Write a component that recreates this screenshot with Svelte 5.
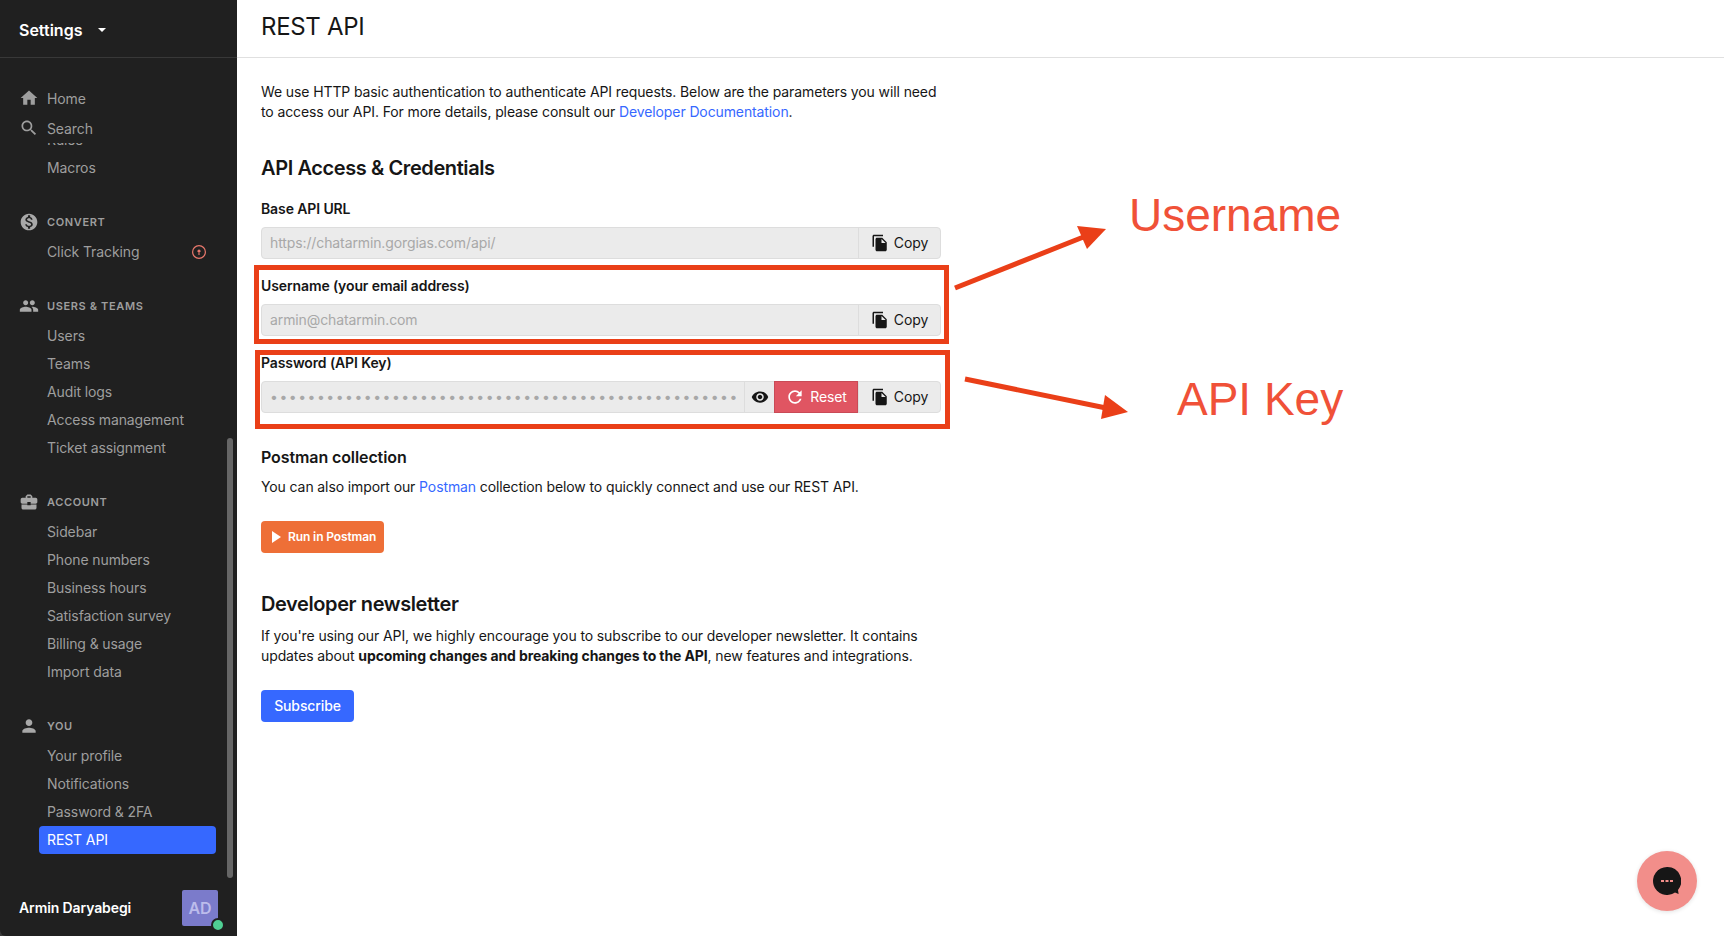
<script>
  const icons = {
    home: 'M10 20v-6h4v6h5v-8h3L12 3 2 12h3v8z',
    search: 'M15.5 14h-.79l-.28-.27C15.41 12.59 16 11.11 16 9.5 16 5.91 13.09 3 9.5 3S3 5.91 3 9.5 5.91 16 9.5 16c1.61 0 3.09-.59 4.23-1.57l.27.28v.79l5 4.99L20.49 19l-4.99-5zm-6 0C7.01 14 5 11.99 5 9.5S7.01 5 9.5 5 14 7.01 14 9.5 11.99 14 9.5 14z',
    convert: 'M12 2C6.48 2 2 6.48 2 12s4.48 10 10 10 10-4.48 10-10S17.52 2 12 2zm1.41 16.09V20h-2.67v-1.93c-1.71-.36-3.16-1.46-3.27-3.4h1.96c.1 1.05.82 1.87 2.65 1.87 1.96 0 2.4-.98 2.4-1.59 0-.83-.44-1.61-2.67-2.14-2.48-.6-4.18-1.62-4.18-3.67 0-1.72 1.39-2.84 3.11-3.21V4h2.67v1.95c1.86.45 2.79 1.86 2.85 3.39H14.3c-.05-1.11-.64-1.87-2.22-1.87-1.5 0-2.4.68-2.4 1.64 0 .84.65 1.39 2.67 1.91s4.18 1.39 4.18 3.91c-.01 1.83-1.38 2.83-3.12 3.16z',
    people: 'M16 11c1.66 0 2.99-1.34 2.99-3S17.66 5 16 5c-1.66 0-3 1.34-3 3s1.34 3 3 3zm-8 0c1.66 0 2.99-1.34 2.99-3S9.66 5 8 5C6.34 5 5 6.34 5 8s1.34 3 3 3zm0 2c-2.33 0-7 1.17-7 3.5V19h14v-2.5c0-2.33-4.67-3.5-7-3.5zm8 0c-.29 0-.62.02-.97.05 1.16.84 1.97 1.97 1.97 3.45V19h6v-2.5c0-2.33-4.67-3.5-7-3.5z',
    account: 'M10 16v-1H3.01L3 19c0 1.11.89 2 2 2h14c1.11 0 2-.89 2-2v-4h-7v1h-4zm10-9h-4.01V5l-2-2h-4l-2 2v2H4c-1.1 0-2 .9-2 2v3c0 1.11.89 2 2 2h6v-2h4v2h6c1.1 0 2-.9 2-2V9c0-1.1-.9-2-2-2zm-6 0h-4V5h4v2z',
    person: 'M12 12c2.21 0 4-1.79 4-4s-1.79-4-4-4-4 1.79-4 4 1.79 4 4 4zm0 2c-2.67 0-8 1.34-8 4v2h16v-2c0-2.66-5.33-4-8-4z',
    copy: 'M16 1H4c-1.1 0-2 .9-2 2v14h2V3h12V1zm-1 4l6 6v10c0 1.1-.9 2-2 2H7.99C6.89 23 6 22.1 6 21l.01-14c0-1.1.89-2 1.99-2h7zm-1 7h5.5L14 6.5V12z',
    eye: 'M12 4.5C7 4.5 2.73 7.61 1 12c1.73 4.39 6 7.5 11 7.5s9.27-3.11 11-7.5c-1.73-4.39-6-7.5-11-7.5zM12 17c-2.76 0-5-2.24-5-5s2.24-5 5-5 5 2.24 5 5-2.24 5-5 5zm0-8c-1.66 0-3 1.34-3 3s1.34 3 3 3 3-1.34 3-3-1.34-3-3-3z',
    reset: 'M17.65 6.35C16.2 4.9 14.21 4 12 4c-4.42 0-7.99 3.58-7.99 8s3.57 8 7.99 8c3.73 0 6.84-2.55 7.73-6h-2.08c-.82 2.33-3.04 4-5.65 4-3.31 0-6-2.69-6-6s2.69-6 6-6c1.66 0 3.14.69 4.22 1.78L13 11h7V4l-2.35 2.35z'
  };

  const sections = [
    { title: 'Convert', icon: 'convert', items: ['Click Tracking'] },
    { title: 'Users & teams', icon: 'people', items: ['Users', 'Teams', 'Audit logs', 'Access management', 'Ticket assignment'] },
    { title: 'Account', icon: 'account', items: ['Sidebar', 'Phone numbers', 'Business hours', 'Satisfaction survey', 'Billing & usage', 'Import data'] },
    { title: 'You', icon: 'person', items: ['Your profile', 'Notifications', 'Password & 2FA', 'REST API'] }
  ];

  const active = 'REST API';
  const apiKey = 'x'.repeat(71);
</script>

{#snippet icon(name, size)}
  <svg class="icon" width={size} height={size} viewBox="0 0 24 24" fill="currentColor" aria-hidden="true"><path d={icons[name]} /></svg>
{/snippet}

{#snippet copyButton()}
  <button class="addon copy">{@render icon('copy', 18)}Copy</button>
{/snippet}

<div class="page">
  <aside class="sidebar">
    <div class="sidebar-head">
      <span>Settings</span>
      <span class="caret"></span>
    </div>

    <nav class="top-links">
      <a class="top-link">{@render icon('home', 20)}<span>Home</span></a>
      <a class="top-link">{@render icon('search', 20)}<span>Search</span></a>
    </nav>

    <div class="scroll">
      <a class="nav-item rules">Rules</a>
      <a class="nav-item">Macros</a>

      {#each sections as section}
        <section class="nav-section">
          <h4>
            <span class="section-icon">{@render icon(section.icon, 20)}</span>
            {section.title}
          </h4>
          {#each section.items as item}
            <a class="nav-item" class:active={item === active}>
              {item}
              {#if item === 'Click Tracking'}
                <svg class="upgrade" width="16" height="16" viewBox="0 0 16 16" fill="none" stroke="#e9786c" aria-hidden="true">
                  <circle cx="8" cy="8" r="6.4" stroke-width="1.2" />
                  <path d="M8 11V6M6.5 7.5 8 6l1.500 1.500" stroke-width="1.1" />
                </svg>
              {/if}
            </a>
          {/each}
        </section>
      {/each}
      <div class="scrollbar"></div>
    </div>

    <div class="user">
      <span class="user-name">Armin Daryabegi</span>
      <span class="avatar">AD<span class="status"></span></span>
    </div>
  </aside>

  <main class="main">
    <header class="main-head">REST API</header>

    <div class="content">
      <p class="intro">We use HTTP basic authentication to authenticate API requests. Below are the parameters you will need to access our API. For more details, please consult our <a href="#docs">Developer Documentation</a>.</p>

      <h2>API Access &amp; Credentials</h2>

      <div class="field">
        <label for="base">Base API URL</label>
        <div class="group">
          <input id="base" readonly value="https://chatarmin.gorgias.com/api/" />
          {@render copyButton()}
        </div>
      </div>

      <div class="field">
        <label for="username">Username (your email address)</label>
        <div class="group">
          <input id="username" readonly value="armin@chatarmin.com" />
          {@render copyButton()}
        </div>
      </div>

      <div class="field">
        <label for="password">Password (API Key)</label>
        <div class="group">
          <input id="password" type="password" readonly value={apiKey} />
          <button class="addon eye">{@render icon('eye', 18)}</button>
          <button class="addon reset">{@render icon('reset', 20)}Reset</button>
          {@render copyButton()}
        </div>
      </div>

      <h3>Postman collection</h3>
      <p>You can also import our <a href="#postman">Postman</a> collection below to quickly connect and use our REST API.</p>
      <button class="postman"><span class="play"></span>Run in Postman</button>

      <h2 class="newsletter">Developer newsletter</h2>
      <p>If you're using our API, we highly encourage you to subscribe to our developer newsletter. It contains updates about <strong>upcoming changes and breaking changes to the API</strong>, new features and integrations.</p>
      <button class="subscribe">Subscribe</button>
    </div>
  </main>

  <!-- annotations drawn on top of the screenshot -->
  <div class="mark mark-user"></div>
  <div class="mark mark-key"></div>
  <svg class="arrows" width="1724" height="936" viewBox="0 0 1724 936" aria-hidden="true">
    <path d="M955 288 1086 236" stroke="#ea3f18" stroke-width="5" fill="none" />
    <path d="M1077 226 1106 229 1087 249z" fill="#ea3f18" />
    <path d="M965 379 1106 408" stroke="#ea3f18" stroke-width="5" fill="none" />
    <path d="M1105 395 1128 412 1101 419z" fill="#ea3f18" />
  </svg>
  <span class="note note-user">Username</span>
  <span class="note note-key">API Key</span>

  <button class="chat" aria-label="Open chat">
    <svg width="28" height="28" viewBox="0 0 28 28" aria-hidden="true">
      <path d="M14 0a14 14 0 1 0 8 25.5l3.6 1.4-.6-4A14 14 0 0 0 14 0z" fill="#161616" />
      <rect x="8" y="13" width="3" height="2" fill="#f28e8a" />
      <rect x="12.500" y="13" width="3" height="2" fill="#f28e8a" />
      <rect x="17" y="13" width="3" height="2" fill="#f28e8a" />
    </svg>
  </button>
</div>

<style>
  :global(body) {
    margin: 0;
    background: #fff;
    font-family: Inter, "Liberation Sans", sans-serif;
    color: #161616;
  }

  .page {
    position: relative;
    display: flex;
    width: 1724px;
    height: 936px;
    overflow: hidden;
    background: #3a3a3a;
    font-size: 14px;
    line-height: 20px;
    letter-spacing: -0.11px;
  }

  .sidebar {
    display: flex;
    flex-direction: column;
    flex: 0 0 237px;
    background: #202020;
    color: #9e9e9e;
    border-bottom-left-radius: 6px;
  }

  .sidebar-head {
    display: flex;
    align-items: center;
    gap: 16px;
    height: 58px;
    box-sizing: border-box;
    padding: 2px 19px 0;
    border-bottom: 1px solid #383838;
    color: #fff;
    font-size: 16px;
    font-weight: 600;
    letter-spacing: 0;
  }

  .caret {
    width: 0;
    height: 0;
    border-left: 4px solid transparent;
    border-right: 4px solid transparent;
    border-top: 4px solid #fff;
  }

  .top-links {
    display: flex;
    flex-direction: column;
    gap: 2px;
    padding-top: 27px;
  }

  .top-link {
    display: flex;
    align-items: center;
    gap: 8px;
    height: 28px;
    padding-left: 19px;
  }

  .top-link .icon {
    margin-top: -2px;
  }

  .scroll {
    position: relative;
    flex: 1;
    overflow: hidden;
    min-height: 0;
  }

  .nav-item {
    display: flex;
    align-items: center;
    justify-content: space-between;
    height: 28px;
    margin-left: 39px;
    width: 177px;
    box-sizing: border-box;
    padding: 0 8px;
    border-radius: 4px;
  }

  .nav-item.rules {
    margin-top: -17px;
  }

  .nav-item.active {
    background: #3668ff;
    color: #fff;
  }

  .upgrade {
    margin-right: 1px;
  }

  .nav-section {
    margin-top: 24px;
  }

  h4 {
    display: flex;
    align-items: center;
    height: 32px;
    margin: 0;
    padding-left: 19px;
    font-size: 11px;
    font-weight: 600;
    letter-spacing: 0.63px;
    text-transform: uppercase;
  }

  .section-icon {
    display: flex;
    width: 28px;
    color: #a8a8a8;
  }

  .scrollbar {
    position: absolute;
    top: 295px;
    right: 4px;
    width: 6px;
    height: 440px;
    border-radius: 3px;
    background: #666;
  }

  .user {
    display: flex;
    align-items: center;
    justify-content: space-between;
    flex: 0 0 auto;
    height: 56px;
    padding: 0 19px;
    color: #fff;
    font-weight: 600;
  }

  .avatar {
    position: relative;
    display: flex;
    align-items: center;
    justify-content: center;
    width: 36px;
    height: 36px;
    border-radius: 2px;
    background: #7b7bcb;
    color: #bcbceb;
    font-size: 16px;
  }

  .status {
    position: absolute;
    right: -7px;
    bottom: -6px;
    width: 10px;
    height: 10px;
    border-radius: 50%;
    background: #4fcf93;
    border: 2px solid #202020;
  }

  .main {
    flex: 1;
    min-width: 0;
    background: #fff;
  }

  .main-head {
    display: flex;
    align-items: center;
    height: 58px;
    box-sizing: border-box;
    padding: 0 24px 4px;
    border-bottom: 1px solid #e0e0e0;
    font-size: 24px;
    line-height: 32px;
    letter-spacing: -0.3px;
  }

  .content {
    width: 680px;
    padding: 24px 0 0 24px;
  }

  p {
    margin: 0;
  }

  a {
    color: #3668ff;
    text-decoration: none;
  }

  .sidebar a {
    color: inherit;
  }

  .sidebar a.active {
    color: #fff;
  }

  h2 {
    margin: 32px 0 0;
    font-size: 20px;
    line-height: 28px;
    font-weight: 600;
    letter-spacing: -0.4px;
  }

  h3 {
    margin: 32px 0 0;
    font-size: 16px;
    line-height: 24px;
    font-weight: 600;
    letter-spacing: -0.1px;
  }

  h3 + p {
    margin-top: 8px;
  }

  .field {
    margin-top: 17px;
  }

  label {
    display: block;
    margin-bottom: 8px;
    font-weight: 600;
  }

  .group {
    display: flex;
    height: 32px;
    box-sizing: border-box;
    border: 1px solid #ddd;
    border-radius: 4px;
    background: #ebebeb;
  }

  input {
    flex: 1;
    min-width: 0;
    border: 0;
    outline: 0;
    padding: 0 8px;
    background: transparent;
    font: inherit;
    letter-spacing: inherit;
    color: #a8a8a8;
  }

  input[type="password"] {
    letter-spacing: 1.5px;
  }

  button {
    font: inherit;
    letter-spacing: inherit;
    border: 0;
    cursor: pointer;
  }

  .addon {
    display: flex;
    align-items: center;
    justify-content: center;
    gap: 4px;
    background: transparent;
    border-left: 1px solid #ddd;
    color: #161616;
    padding: 0;
  }

  .copy {
    width: 82px;
    gap: 5px;
  }

  .eye {
    width: 30px;
  }

  .reset {
    width: 84px;
    margin: -1px 0;
    gap: 5px;
    background: #e05562;
    border: 1px solid #c94a56;
    color: #fff;
  }

  .postman {
    display: flex;
    align-items: center;
    gap: 7px;
    height: 32px;
    width: 123px;
    margin-top: 24px;
    padding: 0 0 0 11px;
    border-radius: 4px;
    background: #ee6f37;
    color: #fff;
    font-size: 12px;
    font-weight: 600;
  }

  .play {
    border-left: 9px solid #fff;
    border-top: 6px solid transparent;
    border-bottom: 6px solid transparent;
  }

  h2.newsletter {
    margin-top: 37px;
  }

  h2.newsletter + p {
    margin-top: 8px;
  }

  .subscribe {
    display: block;
    height: 32px;
    width: 93px;
    margin-top: 24px;
    border-radius: 4px;
    background: #3668ff;
    color: #fff;
    font-weight: 500;
  }

  .mark {
    position: absolute;
    box-sizing: border-box;
    border: 5px solid #ea3f18;
  }

  .mark-user {
    left: 254px;
    top: 265px;
    width: 695px;
    height: 79px;
  }

  .mark-key {
    left: 255px;
    top: 350px;
    width: 695px;
    height: 79px;
  }

  .arrows {
    position: absolute;
    inset: 0;
    pointer-events: none;
  }

  .note {
    position: absolute;
    font-family: "Liberation Sans", Arial, sans-serif;
    font-size: 46px;
    line-height: 52px;
    letter-spacing: 0;
    color: #f05138;
  }

  .note-user {
    left: 1129px;
    top: 189px;
  }

  .note-key {
    left: 1177px;
    top: 373px;
  }

  .chat {
    position: absolute;
    right: 27px;
    bottom: 25px;
    display: flex;
    align-items: center;
    justify-content: center;
    width: 60px;
    height: 60px;
    padding: 0;
    border-radius: 50%;
    background: #f28e8a;
    box-shadow: 0 1px 4px rgba(0, 0, 0, 0.12);
  }
</style>
